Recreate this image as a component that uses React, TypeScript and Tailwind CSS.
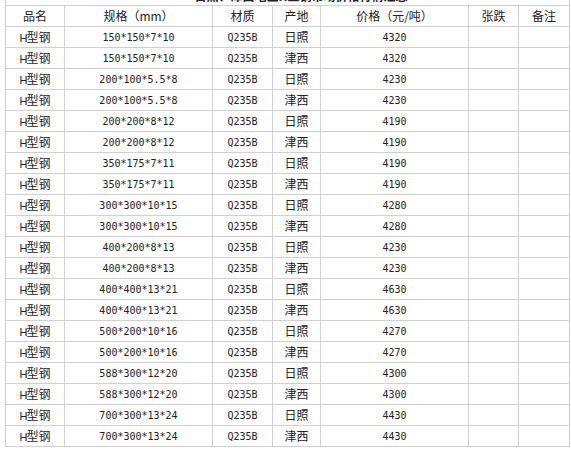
import React from "react";

const rows: [string, string, string, string][] = [
  ["150*150*7*10", "Q235B", "日照", "4320"],
  ["150*150*7*10", "Q235B", "津西", "4320"],
  ["200*100*5.5*8", "Q235B", "日照", "4230"],
  ["200*100*5.5*8", "Q235B", "津西", "4230"],
  ["200*200*8*12", "Q235B", "日照", "4190"],
  ["200*200*8*12", "Q235B", "津西", "4190"],
  ["350*175*7*11", "Q235B", "日照", "4190"],
  ["350*175*7*11", "Q235B", "津西", "4190"],
  ["300*300*10*15", "Q235B", "日照", "4280"],
  ["300*300*10*15", "Q235B", "津西", "4280"],
  ["400*200*8*13", "Q235B", "日照", "4230"],
  ["400*200*8*13", "Q235B", "津西", "4230"],
  ["400*400*13*21", "Q235B", "日照", "4630"],
  ["400*400*13*21", "Q235B", "津西", "4630"],
  ["500*200*10*16", "Q235B", "日照", "4270"],
  ["500*200*10*16", "Q235B", "津西", "4270"],
  ["588*300*12*20", "Q235B", "日照", "4300"],
  ["588*300*12*20", "Q235B", "津西", "4300"],
  ["700*300*13*24", "Q235B", "日照", "4430"],
  ["700*300*13*24", "Q235B", "津西", "4430"],
];

const cjk = "font-['SimSun','Noto_Sans_CJK_SC',sans-serif]";
const mono = "font-['DejaVu_Sans_Mono','Liberation_Mono',monospace] text-[10px]";
const cell = "border border-[#d0d0d0] p-0 h-[21px] text-center align-middle";

export default function App() {
  return (
    <div className="bg-white w-[571px] h-[453px] overflow-hidden text-[#222]">
      <table className="table-fixed border-collapse ml-[5px] -mt-[13px] w-[564px]">
        <colgroup>
          <col className="w-[59px]" />
          <col className="w-[148px]" />
          <col className="w-[60px]" />
          <col className="w-[48px]" />
          <col className="w-[148px]" />
          <col className="w-[50px]" />
          <col className="w-[51px]" />
        </colgroup>
        <tbody>
          <tr>
            <td colSpan={7} className={`border-x border-[#d0d0d0] p-0 h-[18px] text-center text-[12px] font-bold leading-[18px] pl-[27px] ${cjk}`}>
              日照、津西地区H型钢市场价格行情汇总
            </td>
          </tr>
          <tr className={`text-[12px] ${cjk}`}>
            <td className={cell}>品名</td>
            <td className={cell}>规格（mm）</td>
            <td className={cell}>材质</td>
            <td className={cell}>产地</td>
            <td className={cell}>价格（元/吨）</td>
            <td className={cell}>张跌</td>
            <td className={cell}>备注</td>
          </tr>
          {rows.map((r, i) => (
            <tr key={i}>
              <td className={`${cell} text-[12px] ${cjk}`}>
                <span className="font-['Liberation_Sans',sans-serif] text-[11px] tracking-[-1px]">H</span>型钢
              </td>
              <td className={`${cell} ${mono}`}>{r[0]}</td>
              <td className={`${cell} ${mono}`}>{r[1]}</td>
              <td className={`${cell} text-[12px] ${cjk}`}>{r[2]}</td>
              <td className={`${cell} ${mono}`}>{r[3]}</td>
              <td className={cell}></td>
              <td className={cell}></td>
            </tr>
          ))}
        </tbody>
      </table>
    </div>
  );
}
